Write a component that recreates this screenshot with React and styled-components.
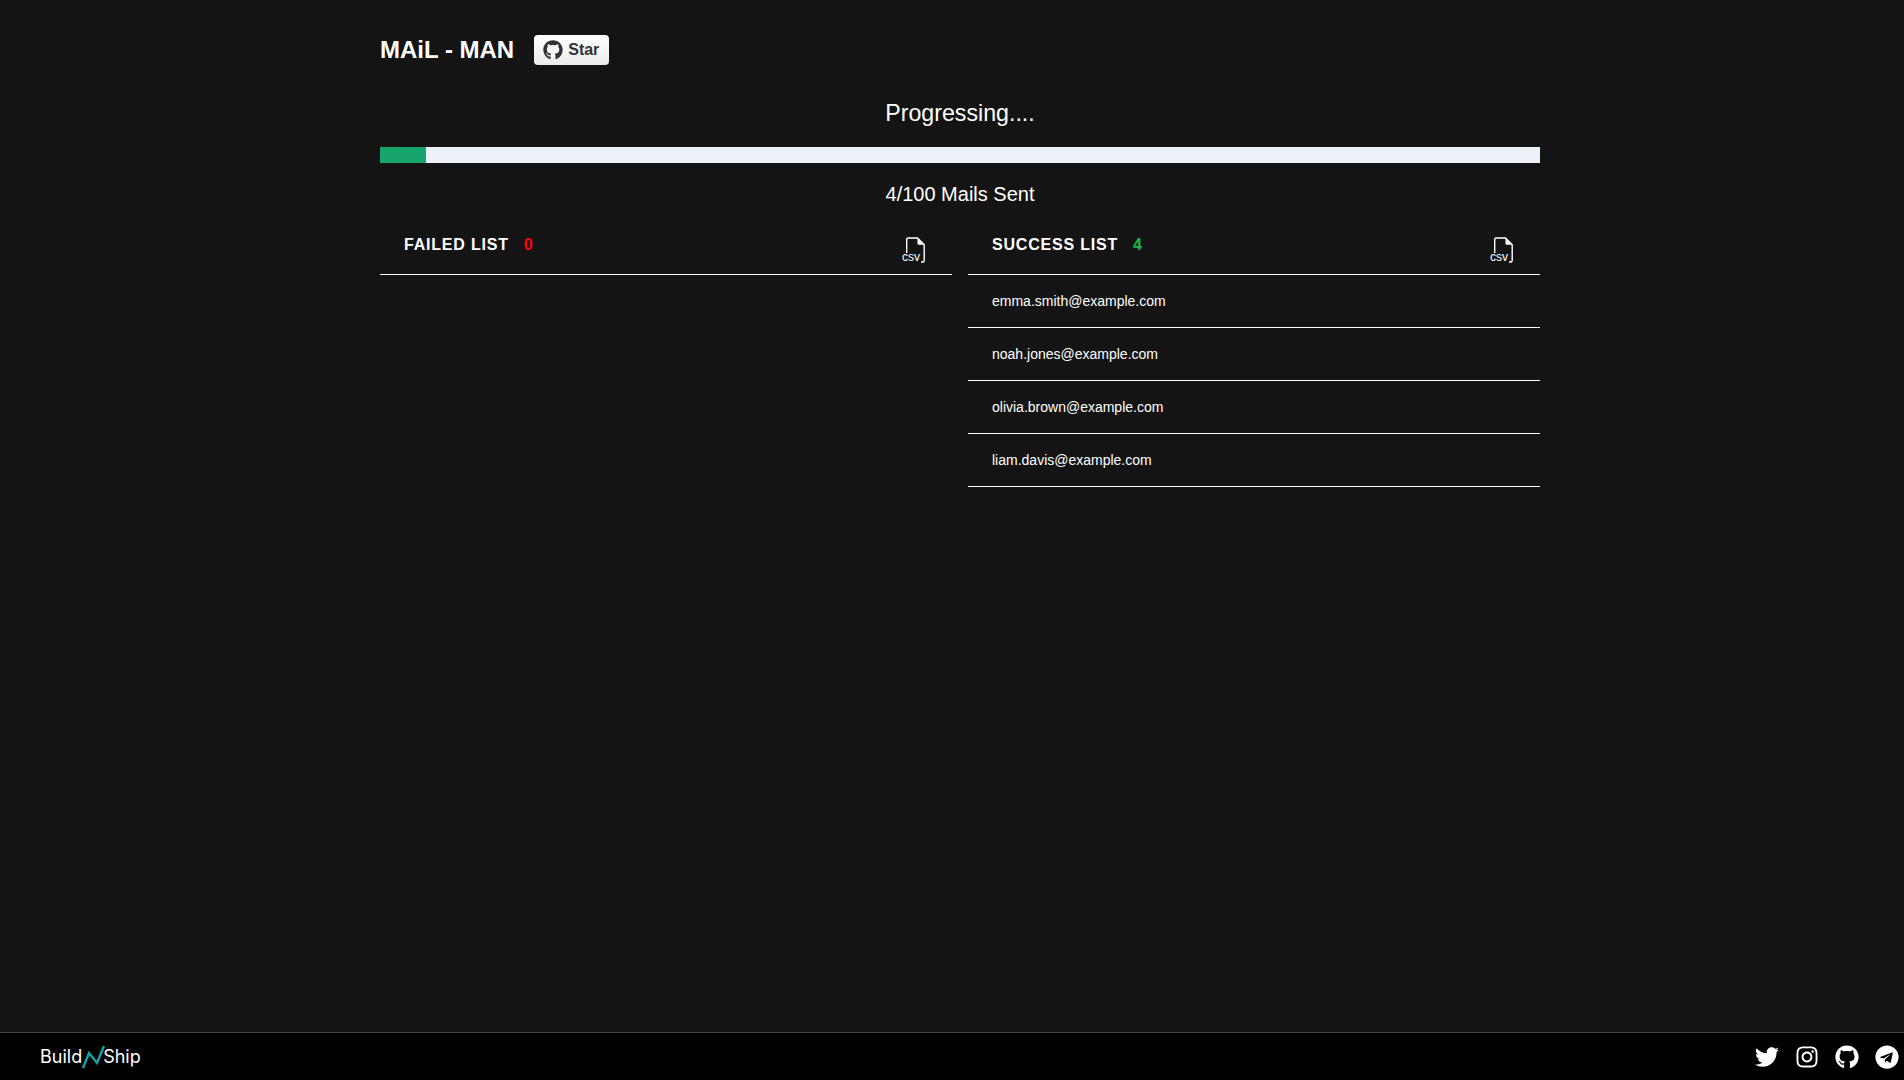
import React from 'react';
import styled, {createGlobalStyle} from 'styled-components';
import {FaGithub, FaTwitter, FaInstagram, FaTelegram} from 'react-icons/fa';

const GlobalStyle = createGlobalStyle`
  * {
    box-sizing: border-box;
  }

  body {
    margin: 0;
    background: #141414;
    color: #fff;
    font-family: "Liberation Sans", Arial, sans-serif;
  }
`;

const CsvIcon = () => (
    <CsvButton>
        <svg width="22" height="26" viewBox="0 0 22 26" fill="none">
            <path d="M3.7 16V2.5Q3.7 1 5.2 1H14.5L21.2 7.7V23.5Q21.2 25 19.7 25H18" stroke="#fff" strokeWidth="1.4"/>
            <path d="M14.5 1L21.2 7.7H15.5Q14.5 7.7 14.5 6.7Z" fill="#fff"/>
        </svg>
        <CsvLabel>csv</CsvLabel>
    </CsvButton>
);

const BuildShipLogo = () => (
    <LogoMark width="24" height="24" viewBox="0 0 24 24" fill="none">
        <path d="M2 23L8 8L16 18L23 1" stroke="#0ea5a5" strokeWidth="2.4"/>
    </LogoMark>
);

const ListColumn = ({title, color, items}) => (
    <Column>
        <ColumnHead>
            <HeadTitle>
                {title}
                <Count $color={color}>{items.length}</Count>
            </HeadTitle>
            <CsvIcon/>
        </ColumnHead>
        {items.map((mail) => <Row key={mail}>{mail}</Row>)}
    </Column>
);

const App = () => {
    const sent = [
        'emma.smith@example.com',
        'noah.jones@example.com',
        'olivia.brown@example.com',
        'liam.davis@example.com',
    ];

    return (
        <Page>
            <GlobalStyle/>
            <Main>
                <Header>
                    <Title>MAiL - MAN</Title>
                    <StarButton><FaGithub/>Star</StarButton>
                </Header>
                <Progressing>Progressing....</Progressing>
                <Track><Fill style={{width: `${sent.length}%`}}/></Track>
                <SentText>{sent.length}/100 Mails Sent</SentText>
                <Columns>
                    <ListColumn title="FAILED LIST" color="#ff0019" items={[]}/>
                    <ListColumn title="SUCCESS LIST" color="#1ab84a" items={sent}/>
                </Columns>
            </Main>
            <Footer>
                <Brand>Build<BuildShipLogo/>Ship</Brand>
                <Socials>
                    <FaTwitter/>
                    <FaInstagram/>
                    <FaGithub/>
                    <FaTelegram/>
                </Socials>
            </Footer>
        </Page>
    );
};

const Page = styled.div`
  min-height: 100vh;
  display: flex;
  flex-direction: column;
`;

const Main = styled.main`
  flex: 1;
  width: 1160px;
  margin-left: 380px;
`;

const Header = styled.header`
  display: flex;
  align-items: center;
  gap: 20px;
  height: 30px;
  margin-top: 35px;
`;

const Title = styled.h1`
  margin: 0;
  font-size: 24px;
  font-weight: 700;
`;

const StarButton = styled.a`
  display: flex;
  align-items: center;
  gap: 5px;
  width: 75px;
  height: 30px;
  padding-left: 9px;
  border-radius: 4px;
  background: linear-gradient(#fff, #ececec);
  color: #333;
  font-size: 16px;
  font-weight: 700;

  svg {
    font-size: 20px;
  }
`;

const Progressing = styled.div`
  margin-top: 34px;
  height: 28px;
  line-height: 28px;
  font-size: 23.2px;
  text-align: center;
`;

const Track = styled.div`
  height: 16px;
  margin-top: 20px;
  background: #edf2f9;
`;

const Fill = styled.div`
  height: 100%;
  background: #18a56b;
`;

const SentText = styled.div`
  margin-top: 20px;
  height: 23px;
  line-height: 23px;
  font-size: 20px;
  text-align: center;
`;

const Columns = styled.div`
  display: grid;
  grid-template-columns: 1fr 1fr;
  gap: 16px;
`;

const Column = styled.section`
  min-width: 0;
`;

const ColumnHead = styled.div`
  display: flex;
  justify-content: space-between;
  height: 69px;
  padding: 29px 27px 0 24px;
  border-bottom: 1px solid #fff;
`;

const HeadTitle = styled.div`
  font-size: 16px;
  font-weight: 700;
  letter-spacing: 0.8px;
  line-height: 20px;
`;

const Count = styled.span`
  margin-left: 15px;
  color: ${(props) => props.$color};
`;

const CsvButton = styled.div`
  position: relative;
  width: 22px;
  height: 26px;
  margin-top: 2px;
`;

const CsvLabel = styled.span`
  position: absolute;
  left: -1px;
  bottom: 0;
  font-size: 12px;
  line-height: 11px;
`;

const Row = styled.div`
  display: flex;
  align-items: center;
  height: 53px;
  padding: 0 24px;
  font-size: 14px;
  border-bottom: 1px solid #fff;
`;

const Footer = styled.footer`
  display: flex;
  align-items: center;
  justify-content: space-between;
  height: 48px;
  padding: 0 5px 0 40px;
  background: #000;
  border-top: 1px solid #444;
`;

const Brand = styled.div`
  display: flex;
  align-items: center;
  font-family: Inter, sans-serif;
  font-size: 18px;
  color: #fff;
`;

const LogoMark = styled.svg`
  margin: 0 -2px 0 -1px;
`;

const Socials = styled.div`
  display: flex;
  align-items: center;
  gap: 16px;

  svg {
    font-size: 24px;
  }
`;

export default App;
